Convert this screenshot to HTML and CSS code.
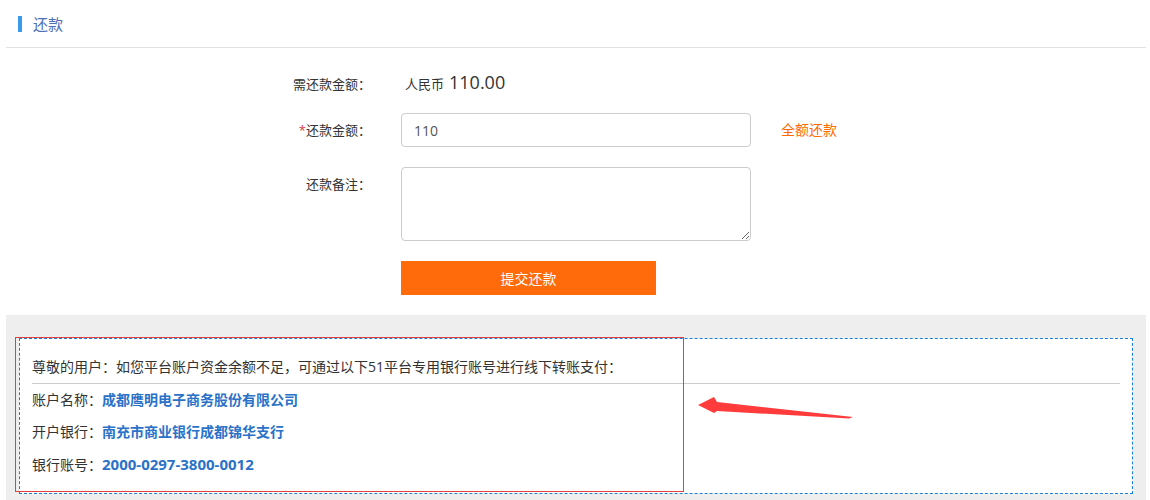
FILE: index.html
```html
<!DOCTYPE html>
<html lang="zh-CN">
<head>
<meta charset="utf-8">
<title>还款</title>
<link rel="stylesheet" href="styles.css">
</head>
<body>
<div class="page">
  <div class="header">
    <span class="bar"></span>
    <span class="title">还款</span>
  </div>
  <form class="form">
    <div class="row row-first">
      <label class="label">需还款金额：</label>
      <div class="value"><span class="cur">人民币</span><span class="num">110.00</span></div>
    </div>
    <div class="row">
      <label class="label"><span class="req">*</span>还款金额：</label>
      <input class="input" type="text" value="110">
      <a class="full">全额还款</a>
    </div>
    <div class="row">
      <label class="label">还款备注：</label>
      <textarea class="textarea"></textarea>
    </div>
    <div class="row">
      <span class="label"></span>
      <button class="submit" type="button">提交还款</button>
    </div>
  </form>
  <div class="info">
    <div class="box">
      <p class="notice">尊敬的用户：如您平台账户资金余额不足，可通过以下51平台专用银行账号进行线下转账支付：</p>
      <div class="divider"></div>
      <p class="line">账户名称：<b class="val">成都鹰明电子商务股份有限公司</b></p>
      <p class="line">开户银行：<b class="val">南充市商业银行成都锦华支行</b></p>
      <p class="line">银行账号：<b class="val num-val">2000-0297-3800-0012</b></p>
    </div>
  </div>
</div>
<div class="annot-rect"></div>
<svg class="annot-arrow" width="1150" height="500" viewBox="0 0 1150 500">
  <polygon points="698,405 714,397 717,402 853,417 849,418.5 717,411 714,413" fill="#ff3b3b"/>
</svg>
</body>
</html>
```

FILE: styles.css
```css
html, body {
  margin: 0;
  padding: 0;
  background: #fff;
  height: 500px;
  overflow: hidden;
}
body {
  font-family: "Open Sans", "Noto Sans CJK SC", sans-serif;
  color: #333;
  font-size: 13px;
}
.page {
  margin: 0 4px 0 6px;
}
.header {
  height: 47px;
  border-bottom: 1px solid #e2e2e2;
  display: flex;
  align-items: center;
  padding-left: 12px;
}
.bar {
  width: 4px;
  height: 16px;
  background: #3b9ae6;
  margin-right: 11px;
}
.title {
  font-size: 15px;
  color: #4c6fb6;
  line-height: 20px;
}
.form {
  padding: 19px 0 20px 265px;
}
.row {
  display: flex;
  align-items: flex-start;
  margin-bottom: 20px;
}
.row:last-child {
  margin-bottom: 0;
}
.row-first {
  margin-bottom: 12px;
}
.label {
  width: 100px;
  flex: none;
  text-align: right;
  line-height: 34px;
  font-size: 13px;
  color: #333;
  margin-right: 30px;
}
.req {
  color: #e4393c;
}
.value {
  line-height: 30px;
  display: flex;
  align-items: baseline;
  padding-left: 4px;
}
.cur {
  font-size: 13px;
  margin-right: 5px;
}
.num {
  font-size: 18px;
  color: #333;
}
.input {
  box-sizing: border-box;
  width: 350px;
  height: 34px;
  border: 1px solid #ccc;
  border-radius: 4px;
  padding: 0 12px;
  font-family: "Open Sans", "Noto Sans CJK SC", sans-serif;
  font-size: 14px;
  color: #555;
  outline: none;
  margin: 0;
}
.full {
  margin-left: 30px;
  line-height: 34px;
  font-size: 14px;
  color: #ff6a00;
}
.textarea {
  box-sizing: border-box;
  width: 350px;
  height: 74px;
  border: 1px solid #ccc;
  border-radius: 4px;
  margin: 0;
  padding: 6px 12px;
  font-family: inherit;
  display: block;
}
.submit {
  width: 255px;
  height: 34px;
  border: 0;
  background: #ff6a0a;
  color: #fff;
  font-family: "Open Sans", "Noto Sans CJK SC", sans-serif;
  font-size: 14px;
  padding: 0;
  margin: 0;
}
.info {
  background: #eee;
  padding: 23px 13px 30px 13px;
}
.box {
  background: #fff;
  border: 1px dashed #1a7fd8;
  padding: 17px 12px 12px 12px;
  font-size: 14px;
  color: #333;
}
.notice {
  margin: 0 0 5px 0;
  line-height: 22px;
}
.divider {
  height: 1px;
  background: #ccc;
}
.line {
  margin: 0;
  line-height: 32px;
}
.val {
  color: #2a72c8;
  font-weight: bold;
}
.num-val {
  font-size: 15px;
}
.annot-rect {
  position: absolute;
  left: 15px;
  top: 337px;
  width: 669px;
  height: 155px;
  box-sizing: border-box;
  border: 1px solid #e53e3e;
  pointer-events: none;
}
.annot-arrow {
  position: absolute;
  left: 0;
  top: 0;
  pointer-events: none;
}
```
